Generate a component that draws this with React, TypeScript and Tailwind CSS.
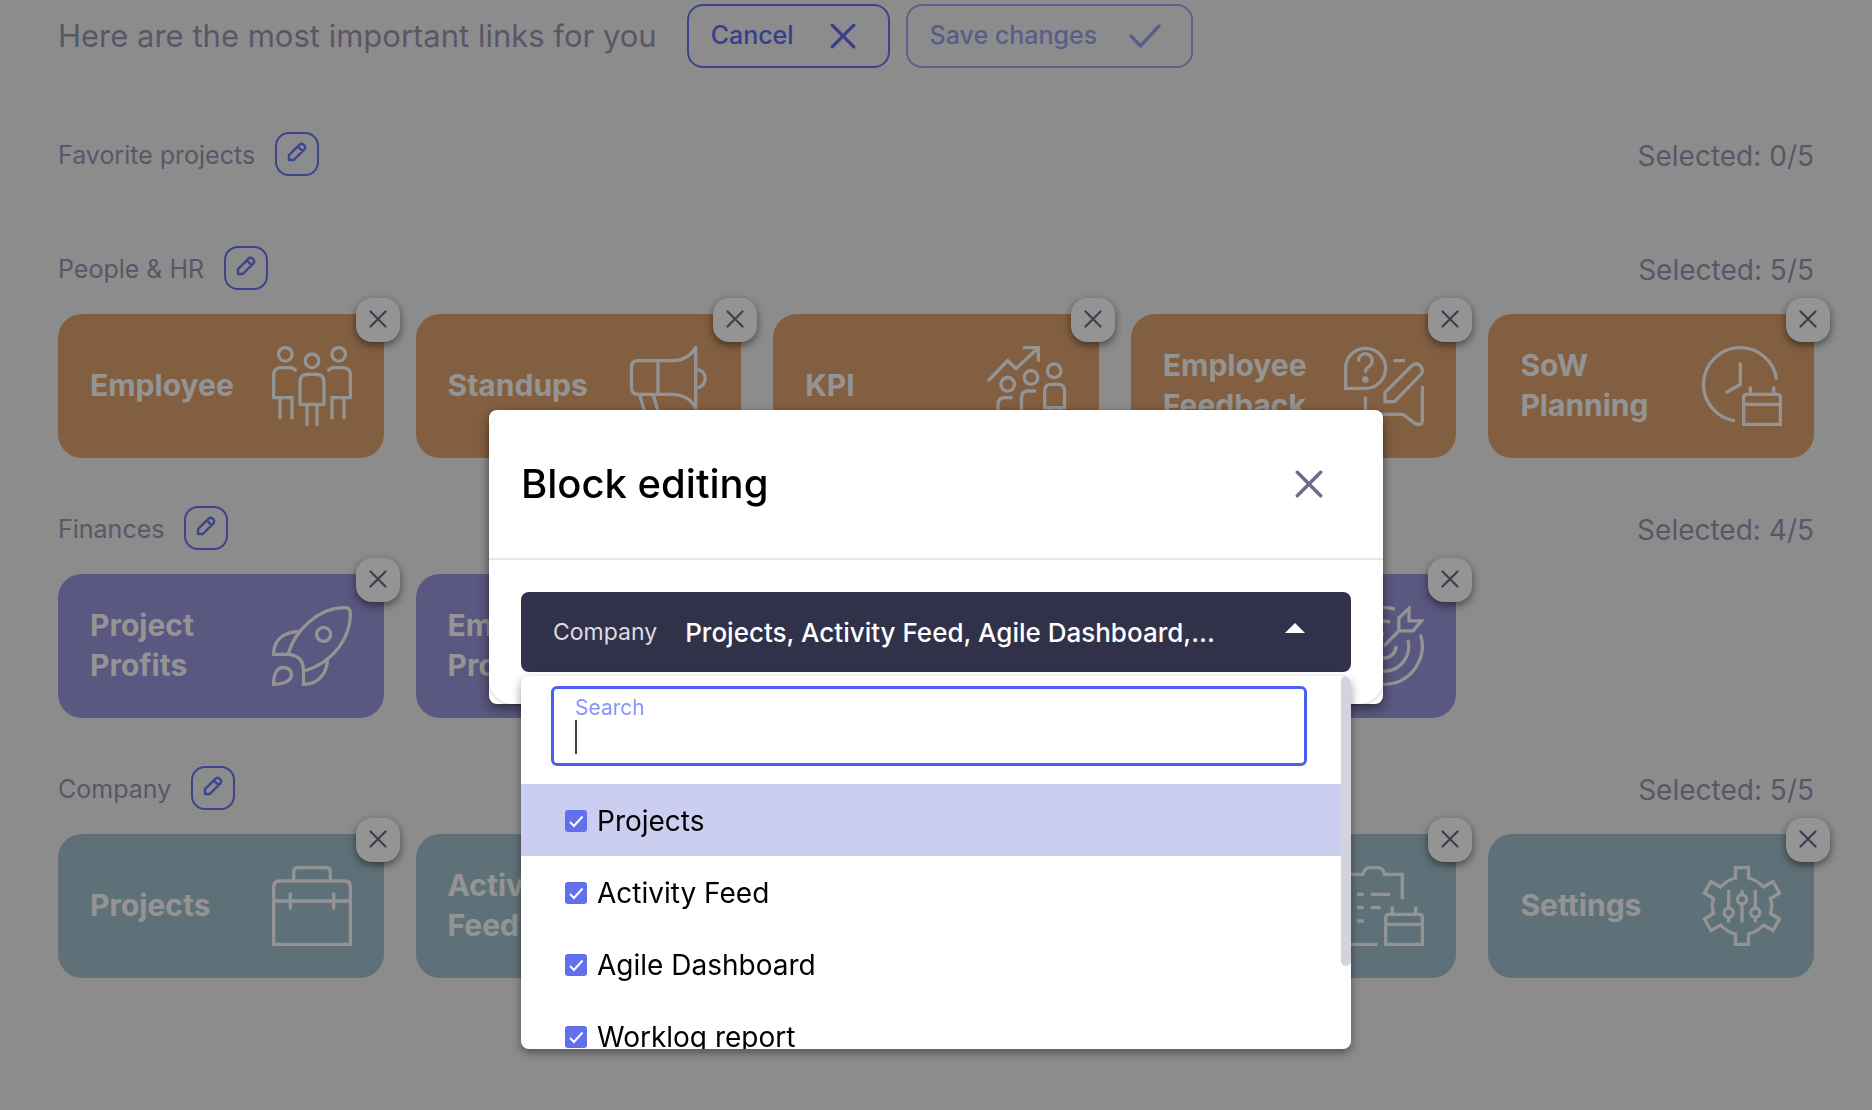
import { useState, type ReactNode } from "react";
import clsx from "clsx";

interface Tile {
  title: string;
  icon: ReactNode;
}

interface Block {
  name: string;
  color: string;
  tiles: Tile[];
}

function LineIcon({ children }: { children: ReactNode }) {
  return (
    <svg
      viewBox="0 0 80 80"
      className="size-20 shrink-0"
      fill="none"
      stroke="currentColor"
      strokeWidth="3.3"
      aria-hidden="true"
    >
      {children}
    </svg>
  );
}

function Cross({ className }: { className: string }) {
  return (
    <svg
      viewBox="0 0 24 24"
      className={className}
      fill="none"
      stroke="currentColor"
      strokeLinecap="round"
      aria-hidden="true"
    >
      <path d="M2 2 22 22M22 2 2 22" />
    </svg>
  );
}

function PencilIcon() {
  return (
    <svg
      viewBox="0 0 20 20"
      className="mb-1 size-5"
      fill="none"
      stroke="currentColor"
      strokeWidth="2.4"
      strokeLinejoin="round"
      aria-hidden="true"
    >
      <path d="M2 18V13.2L12.6 2.6Q14.600 1 16.500 2.600L17.400 3.500Q19 5.400 17.400 7.400L6.800 18ZM10.800 4.400 15.600 9.200" />
    </svg>
  );
}

const calendar = (
  <>
    <path d="M41.7 78.4V51.5Q41.7 48.3 45 48.3H75Q78.4 48.3 78.4 51.5V78.4Z" />
    <path d="M41.7 58.3H78.4M48.3 40.5V48.3M71.7 40.5V48.3" />
  </>
);

const icons = {
  people: (
    <LineIcon>
      <circle cx="13.3" cy="8.3" r="6.8" />
      <circle cx="40" cy="14.8" r="6.8" />
      <circle cx="66.7" cy="8.3" r="6.8" />
      <path d="M24 25.5Q22.5 21.7 18 21.7H9.5Q1.6 21.7 1.6 29.5V51.7H20V73.3M8 51.7V73.3" />
      <path d="M56 25.5Q57.500 21.7 62 21.7H70.5Q78.4 21.7 78.4 29.5V51.7H60V73.3M72 51.7V73.3" />
      <path d="M28 58.3V36Q28 28.3 35.500 28.3H44.5Q52 28.3 52 36V58.3ZM35 58.3V80M45 58.3V80" />
    </LineIcon>
  ),
  megaphone: (
    <LineIcon>
      <path d="M29 14.7H9Q2.500 14.7 2.500 21.500V41.500Q2.500 48.3 9 48.3H44Q60 49 66.7 62V1Q60 14 44 14.7ZM29 14.7V48.3M66.7 0V63.5" />
      <path d="M68.500 23.3A9.400 9.400 0 0 1 68.500 41.8" />
      <path d="M10.5 48.3 18 74Q19.5 78.4 24 78.4H33L24 48.3" />
    </LineIcon>
  ),
  growth: (
    <LineIcon>
      <path d="M1 35 20.7 14.7 29 22.7 51 2M35.7 1.6H51.3V15.700" />
      <circle cx="20.7" cy="38.3" r="6.8" />
      <circle cx="44" cy="31.4" r="6.8" />
      <circle cx="67.2" cy="24.700" r="6.8" />
      <path d="M25.5 51.7H18Q11 51.7 11 58.5V80" />
      <path d="M49 45H41.500Q34.500 45 34.500 52V80" />
      <path d="M57.700 61.700V45Q57.700 38.300 64 38.300H71Q77.500 38.300 77.500 45V61.700ZM63 61.7V80M72 61.7V80" />
    </LineIcon>
  ),
  feedback: (
    <LineIcon>
      <path d="M1.600 42.300V21.700A20 20 0 1 1 21.500 42.300Z" />
      <path d="M14.600 15.500A6.800 6.800 0 1 1 25.500 20Q21.400 22.500 21.400 26.800" />
      <circle cx="21.4" cy="33.600" r="1.600" />
      <path d="M49.5 14.7H61M41 55.700V46.500L67.500 20Q72.500 15.500 77 20.500Q80 25 76.500 29L50.500 55.700Z" />
      <path d="M21.400 50.500V68.300H59L71 77.500Q78.400 80.500 78.400 73.500V40" />
    </LineIcon>
  ),
  clock: (
    <LineIcon>
      <path d="M74.600 33.500A36.700 36.700 0 1 0 33 74.700" />
      <path d="M38.300 16.500V38.500L23.700 46.700" />
      {calendar}
    </LineIcon>
  ),
  rocket: (
    <LineIcon>
      <path d="M16.300 47.500C23 25 46 1.600 72.500 1.600Q78.400 1.600 78.400 8C78.400 30 63 56 32 65" />
      <path d="M28 25.500C10 26 1.600 35 1.600 48.300H16.500Q31.500 49.500 31.500 65V78.400C46 78.400 55.500 68 55.500 51.500" />
      <circle cx="51.600" cy="28.300" r="7" />
      <path d="M1.500 78.400C1.500 68 5 61.500 11.500 61.500Q18.500 61.500 19.500 68C19.500 75 12 78 1.500 78.400Z" />
    </LineIcon>
  ),
  target: (
    <LineIcon>
      <path d="M65 2.500 54.800 12V24.900H69L77.500 14.900H65ZM54.800 24.900 40 40" />
      <path d="M76.500 28.500A38.400 38.400 0 1 1 51 3.200" />
      <path d="M64 34A25 25 0 1 1 46 16" />
      <path d="M52 40A12 12 0 1 1 40 28" />
    </LineIcon>
  ),
  briefcase: (
    <LineIcon>
      <path d="M1.700 78.400V21Q1.700 15 7.500 15H72.500Q78.400 15 78.400 21V78.400ZM1.700 35H78.400" />
      <path d="M21.700 15V6Q21.700 1.700 26 1.700H54Q58.300 1.700 58.300 6V15M18.300 26.500V43.500M61.700 26.500V43.500" />
    </LineIcon>
  ),
  feed: (
    <LineIcon>
      <path d="M2 2H78V58H2ZM14 18H66M14 30H66M14 42H46M28 78H52M40 58V78" />
    </LineIcon>
  ),
  board: (
    <LineIcon>
      <path d="M2 2H78V78H2ZM28 2V78M52 2V78M2 18H78" />
    </LineIcon>
  ),
  worklog: (
    <LineIcon>
      <path d="M33.500 78.300H1.700V8.300H19Q20.500 1.700 26 1.700H34Q39 1.700 40.500 8.300H58.300V33.300" />
      <path d="M13 28.300H19.600M26.700 28.300H46M13 41.700H19.600M26.700 41.700H36.500M13 55H19.600" />
      {calendar}
    </LineIcon>
  ),
  gear: (
    <LineIcon>
      <path d="M33.500 1.700H46.500V12Q55 14 61.500 21L71 15.500 77.500 27 68.500 32.500Q71 40 68.500 47.500L77.500 53 71 64.500 61.500 59Q55 66 46.500 68V78.300H33.500V68Q25 66 18.500 59L9 64.500 2.500 53 11.500 47.500Q9 40 11.500 32.500L2.500 27 9 15.500 18.500 21Q25 14 33.500 12Z" />
      <path d="M26.700 24V42.500M26.700 51V56.500M40 24V29M40 37.500V56.500M53.300 24V42.500M53.300 51V56.500" />
      <circle cx="26.700" cy="46.700" r="4.600" />
      <circle cx="40" cy="33.300" r="4.600" />
      <circle cx="53.300" cy="46.700" r="4.600" />
    </LineIcon>
  ),
};

const blocks: Block[] = [
  { name: "Favorite projects", color: "", tiles: [] },
  {
    name: "People & HR",
    color: "bg-[#e2a470]",
    tiles: [
      { title: "Employee", icon: icons.people },
      { title: "Standups", icon: icons.megaphone },
      { title: "KPI", icon: icons.growth },
      { title: "Employee Feedback", icon: icons.feedback },
      { title: "SoW Planning", icon: icons.clock },
    ],
  },
  {
    name: "Finances",
    color: "bg-[#9b96dc]",
    tiles: [
      { title: "Project Profits", icon: icons.rocket },
      { title: "Employee Profits", icon: icons.people },
      { title: "Budget", icon: icons.growth },
      { title: "Goals", icon: icons.target },
    ],
  },
  {
    name: "Company",
    color: "bg-[#a4c3cf]",
    tiles: [
      { title: "Projects", icon: icons.briefcase },
      { title: "Activity Feed", icon: icons.feed },
      { title: "Agile Dashboard", icon: icons.board },
      { title: "Worklog report", icon: icons.worklog },
      { title: "Settings", icon: icons.gear },
    ],
  },
];

const options = ["Projects", "Activity Feed", "Agile Dashboard", "Worklog report", "Settings"];

function BlockSection({ block }: { block: Block }) {
  const empty = block.tiles.length === 0;
  return (
    <section>
      <div className={clsx("flex h-11 items-center justify-between", empty ? "mb-[22px]" : "mb-6")}>
        <div className="flex items-center gap-5">
          <h2 className="pt-0.5 text-[25px] leading-8">{block.name}</h2>
          <button
            type="button"
            aria-label={`Edit ${block.name}`}
            className="flex size-11 items-center justify-center rounded-[14px] border-2 border-[#6a76ee] text-[#6a76ee]"
          >
            <PencilIcon />
          </button>
        </div>
        <p className="pt-1 text-[28px] leading-8">Selected: {block.tiles.length}/5</p>
      </div>
      {!empty && (
        <ul className="grid grid-cols-5 gap-8">
          {block.tiles.map((tile) => (
            <li
              key={tile.title}
              className={clsx(
                "relative flex h-36 items-center justify-between rounded-3xl px-8 text-white",
                block.color,
              )}
            >
              <a href="#" className="pb-0.5 text-[30px] leading-10 font-bold">
                {tile.title}
              </a>
              {tile.icon}
              <button
                type="button"
                aria-label={`Remove ${tile.title}`}
                className="absolute -top-4 -right-4 flex size-11 items-center justify-center rounded-2xl bg-white pb-0.5 text-[#6f6b8c] shadow-[0_3px_8px_rgba(0,0,0,0.5)]"
              >
                <Cross className="size-[18px] stroke-3" />
              </button>
            </li>
          ))}
        </ul>
      )}
    </section>
  );
}

function BlockSelect() {
  const [checked, setChecked] = useState<string[]>(options);
  const [query, setQuery] = useState("");

  function toggle(name: string) {
    setChecked((prev) =>
      prev.includes(name) ? prev.filter((n) => n !== name) : [...prev, name],
    );
  }

  const visible = options.filter((o) => o.toLowerCase().includes(query.toLowerCase()));

  return (
    <div className="relative">
      <button
        type="button"
        aria-expanded="true"
        className="flex h-20 w-full items-center rounded-lg bg-[#313149] pr-[46px] pl-8 text-left text-white"
      >
        <span className="mr-7 text-[23px] text-[#dcdce4]">Company</span>
        <span className="flex-1 text-[26px] font-medium">{checked.slice(0, 3).join(", ")},...</span>
        <svg viewBox="0 0 20 10" className="mb-2 h-2.5 w-5" fill="currentColor" aria-hidden="true">
          <path d="M0 10 10 0 20 10Z" />
        </svg>
      </button>

      <div className="absolute inset-x-0 top-full mt-1 h-[373px] overflow-hidden rounded-lg bg-white shadow-[0_4px_10px_rgba(0,0,0,0.4)]">
        <div className="mt-2.5 mr-11 mb-[18px] ml-[30px]">
          <div className="relative">
            <label htmlFor="block-search" className="absolute top-2 left-6 text-[21px] leading-7 text-[#8a93fb]">
              Search
            </label>
            <input
              id="block-search"
              type="text"
              value={query}
              onChange={(e) => setQuery(e.target.value)}
              className="h-20 w-full rounded-md border-[3px] border-[#4a60f0] px-[21px] pt-7 text-2xl text-black caret-transparent outline-none"
            />
            {!query && <span className="absolute top-[34px] left-6 h-[34px] w-0.5 bg-[#444]" />}
          </div>
        </div>
        <ul className="mr-2.5">
          {visible.map((name, i) => (
            <li key={name} className={clsx(i === 0 && "bg-[#cbcef1]")}>
              <label className="flex h-[72px] items-center gap-2.5 pt-0.5 pl-11 text-[28px] text-black">
                <span className="grid size-[22px]">
                  <input
                    type="checkbox"
                    checked={checked.includes(name)}
                    onChange={() => toggle(name)}
                    className="peer col-start-1 row-start-1 size-[22px] appearance-none rounded-[3px] border-2 border-[#6370ee] checked:bg-[#6370ee]"
                  />
                  <svg
                    viewBox="0 0 22 22"
                    className="pointer-events-none invisible col-start-1 row-start-1 text-white peer-checked:visible"
                    fill="none"
                    stroke="currentColor"
                    strokeWidth="2"
                    aria-hidden="true"
                  >
                    <path d="M5 12 9 16 17.500 6.500" />
                  </svg>
                </span>
                {name}
              </label>
            </li>
          ))}
        </ul>
        {/* scroll thumb */}
        <div className="absolute top-0 right-0 h-[290px] w-2.5 rounded-full bg-[#d3d2de]" />
      </div>
    </div>
  );
}

export default function App() {
  return (
    <div className="h-screen overflow-hidden bg-[#f2f2f2] font-['Inter',sans-serif] text-[#9a97b2]">
      <main className="px-[58px] pt-1">
        <header className="mb-16 flex items-center">
          <h1 className="mr-[30px] text-[31px]">Here are the most important links for you</h1>
          <button
            type="button"
            className="mr-4 flex h-16 items-center gap-9 rounded-2xl border-2 border-[#6a76ee] pr-8 pl-[22px] text-[25px] font-medium text-[#5f6dec]"
          >
            Cancel
            <Cross className="size-[26px] stroke-3" />
          </button>
          <button
            type="button"
            disabled
            className="flex h-16 items-center gap-8 rounded-2xl border-2 border-[#a0a6ee] pr-[30px] pl-[22px] text-[25px] font-medium text-[#9aa1ee]"
          >
            Save changes
            <svg
              viewBox="0 0 32 24"
              className="h-6 w-8"
              fill="none"
              stroke="currentColor"
              strokeWidth="3.400"
              strokeLinecap="round"
              strokeLinejoin="round"
              aria-hidden="true"
            >
              <path d="M2 12 11.500 22 30 2" />
            </svg>
          </button>
        </header>
        <div className="flex flex-col gap-12">
          {blocks.map((block) => (
            <BlockSection key={block.name} block={block} />
          ))}
        </div>
      </main>

      <div className="fixed inset-0 flex items-center justify-center bg-black/42 pt-1">
        <div
          role="dialog"
          aria-labelledby="dialog-title"
          className="w-full max-w-[894px] rounded-lg bg-white shadow-[0_4px_12px_rgba(0,0,0,0.5)]"
        >
          <div className="rounded-3xl shadow-[0_1px_3px_rgba(0,0,0,0.2)]">
            <div className="flex h-[150px] items-center justify-between border-b-2 border-[#e7e6ee] pr-[60px] pl-8">
              <h2 id="dialog-title" className="text-[40px] font-medium text-black">
                Block editing
              </h2>
              <button type="button" aria-label="Close" className="text-[#6f6b8c]">
                <Cross className="size-7 stroke-3" />
              </button>
            </div>
            <div className="p-8">
              <BlockSelect />
            </div>
          </div>
        </div>
      </div>
    </div>
  );
}
